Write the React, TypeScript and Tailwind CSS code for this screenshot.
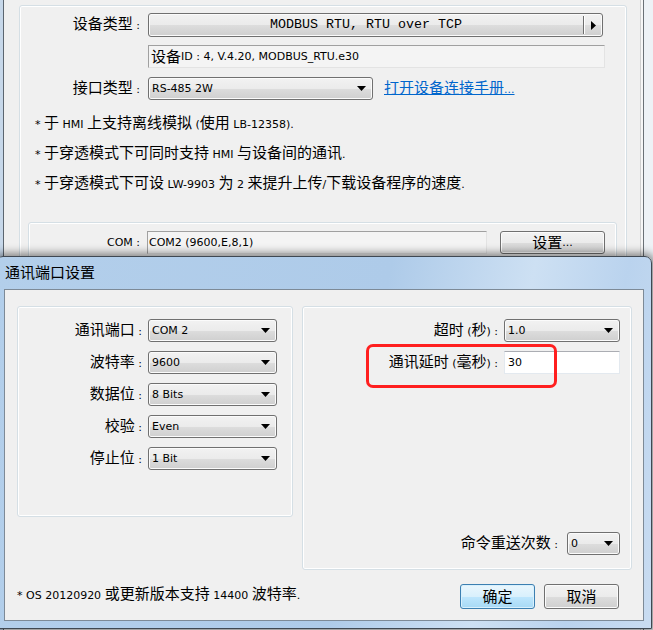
import React from "react";

const CJK_RE = /([\u2e80-\u9fff\u3000-\u303f\uff00-\uffef]+)/;

function T({ text, big = false }: { text: string; big?: boolean }) {
  const parts = text.split(CJK_RE);
  return (
    <>
      {parts.map((p, i) =>
        p === "" ? null : CJK_RE.test(p) ? (
          <span key={i} className={big ? "text-[15px]" : "text-[15px]"}>
            {p}
          </span>
        ) : (
          <span key={i} className="text-[11px]">
            {p}
          </span>
        )
      )}
    </>
  );
}

function DownArrow() {
  return (
    <svg width="9" height="5" viewBox="0 0 9 5" className="shrink-0">
      <polygon points="0,0 9,0 4.5,5" fill="#000" />
    </svg>
  );
}

function Combo({ value, className }: { value: string; className: string }) {
  return (
    <div
      className={
        "flex items-center justify-between rounded-[3px] border border-[#707070] bg-[linear-gradient(to_bottom,#f2f2f2_0%,#ebebeb_50%,#dddddd_51%,#cfcfcf_100%)] pl-[3px] pr-[6px] shadow-[inset_0_0_0_1px_#fbfbfb] leading-[20px] " +
        className
      }
    >
      <span className="whitespace-nowrap">
        <T text={value} />
      </span>
      <DownArrow />
    </div>
  );
}

function WinButton({ label, className, def = false }: { label: string; className: string; def?: boolean }) {
  return (
    <div
      className={
        (def
          ? "border-[#3c7fb1] bg-[linear-gradient(to_bottom,#eaf6fd_0%,#d9f0fc_50%,#bee6fd_51%,#a7d9f5_100%)] shadow-[inset_0_0_0_1px_#d8f0fd] "
          : "border-[#707070] bg-[linear-gradient(to_bottom,#f2f2f2_0%,#ebebeb_50%,#dddddd_51%,#cfcfcf_100%)] shadow-[inset_0_0_0_1px_#fbfbfb] ") +
        "flex items-center justify-center rounded-[3px] border leading-[20px] " +
        className
      }
    >
      <T text={label} />
    </div>
  );
}

export default function App() {
  return (
    <div className="relative h-[630px] w-[653px] overflow-hidden bg-[#f0f0f0] font-['DejaVu_Sans','Noto_Sans_CJK_SC',sans-serif] text-[11px] text-black">
      {/* background window */}
      <div className="flex h-full">
        <div className="w-[3px] bg-[#c7d8ea]" />
        <div className="w-px bg-[#5c6670]" />
        <div className="w-[636px] bg-[#f0f0f0] pl-[15px] pt-[5px]">
          <div className="h-[320px] w-[608px] rounded-[3px] border border-[#d5dfe5] shadow-[inset_0_0_0_1px_#ffffff]">
            {/* row 1 */}
            <div className="mt-[7px] flex items-center">
              <div className="w-[120px] text-right leading-[20px]">
                <T text="设备类型 :" />
              </div>
              <div className="ml-[8px] flex h-[24px] w-[455px] items-center rounded-[3px] border border-[#707070] bg-[linear-gradient(to_bottom,#f2f2f2_0%,#ebebeb_50%,#dddddd_51%,#cfcfcf_100%)] shadow-[inset_0_0_0_1px_#fbfbfb]">
                <span className="flex-1 text-center font-['Liberation_Mono'] text-[13.33px] leading-[20px]">
                  MODBUS RTU, RTU over TCP
                </span>
                <div className="h-[18px] w-px bg-[#6e6e6e]" />
                <div className="h-[18px] w-px bg-[#ffffff]" />
                <div className="flex w-[17px] justify-center">
                  <svg width="5" height="9" viewBox="0 0 5 9">
                    <polygon points="0,0 5,4.5 0,9" fill="#000" />
                  </svg>
                </div>
              </div>
            </div>
            {/* row 2 */}
            <div className="ml-[128px] mt-[8px] flex h-[23px] w-[457px] items-center border border-[#e3e3e3] border-l-[#a0a0a0] border-t-[#a0a0a0] bg-[#f4f4f4] pl-[2px] leading-[20px]">
              <T text="设备 ID : 4, V.4.20, MODBUS_RTU.e30" />
            </div>
            {/* row 3 */}
            <div className="mt-[9px] flex items-center">
              <div className="w-[120px] text-right leading-[20px]">
                <T text="接口类型 :" />
              </div>
              <Combo value="RS-485 2W" className="ml-[8px] h-[23px] w-[225px]" />
              <a className="ml-[11px] text-[#0066cc] underline leading-[20px]">
                <T text="打开设备连接手册..." />
              </a>
            </div>
            {/* bullets */}
            <div className="mt-[9px] pl-[15px] leading-[28px]">
              <div>
                <T text="* 于 HMI 上支持离线模拟 (使用 LB-12358)." />
              </div>
              <div>
                <T text="* 于穿透模式下可同时支持 HMI 与设备间的通讯." />
              </div>
              <div>
                <T text="* 于穿透模式下可设 LW-9903 为 2 来提升上传/下载设备程序的速度." />
              </div>
            </div>
            {/* COM group */}
            <div className="ml-[8px] mt-[23px] h-[100px] w-[589px] rounded-[3px] border border-[#d5dfe5] shadow-[inset_0_0_0_1px_#ffffff]">
              <div className="flex items-center pt-[8px]">
                <div className="w-[111px] text-right leading-[20px]">
                  <T text="COM :" />
                </div>
                <div className="ml-[7px] flex h-[23px] w-[340px] items-center border border-[#e3e3e3] border-l-[#a0a0a0] border-t-[#a0a0a0] bg-[#f4f4f4] pl-[1px] leading-[20px]">
                  <T text="COM2 (9600,E,8,1)" />
                </div>
                <WinButton label="设置..." className="ml-[13px] h-[23px] w-[105px]" />
              </div>
            </div>
          </div>
        </div>
        <div className="w-px bg-[#cfcfcf]" />
        <div className="w-[2px] bg-[#f6f6f6]" />
        <div className="w-px bg-[#6a7076]" />
        <div className="flex-1 bg-[#eef2f6]" />
      </div>

      {/* dialog */}
      <div className="absolute left-[-4px] top-[256px] flex h-[373px] w-[656px] flex-col rounded-t-[7px] border border-[#3f4852] bg-[linear-gradient(100deg,#b3cfeb_0%,#aecbe9_55%,#cde0f3_75%,#bad3ee_88%,#c9dcf1_100%)] shadow-[0_0_9px_3px_rgba(0,0,0,0.45)]">
        <div className="flex h-[32px] items-center pl-[8px] leading-[20px]">
          <T text="通讯端口设置" />
        </div>
        <div className="ml-[7px] h-[332px] w-[640px] border border-[#7d8a97] bg-[#f0f0f0]">
          <div className="flex items-start">
            {/* left group */}
            <div className="ml-[12px] mt-[16px] flex h-[211px] w-[276px] flex-col gap-[9px] rounded-[3px] border border-[#d5dfe5] pt-[12px] shadow-[inset_0_0_0_1px_#ffffff]">
              {[
                ["通讯端口 :", "COM 2"],
                ["波特率 :", "9600"],
                ["数据位 :", "8 Bits"],
                ["校验 :", "Even"],
                ["停止位 :", "1 Bit"],
              ].map(([l, v]) => (
                <div key={l} className="flex items-center">
                  <div className="w-[124px] text-right leading-[20px]">
                    <T text={l} />
                  </div>
                  <Combo value={v} className="ml-[6px] h-[23px] w-[129px]" />
                </div>
              ))}
            </div>
            {/* right group */}
            <div className="ml-[9px] mt-[16px] flex h-[264px] w-[330px] flex-col rounded-[3px] border border-[#d5dfe5] pr-[11px] pt-[12px] shadow-[inset_0_0_0_1px_#ffffff]">
              <div className="flex items-center justify-end">
                <div className="leading-[20px]">
                  <T text="超时 (秒) :" />
                </div>
                <Combo value="1.0" className="ml-[6px] h-[23px] w-[116px]" />
              </div>
              <div className="mt-[9px] flex items-center justify-end">
                <div className="leading-[20px]">
                  <T text="通讯延时 (毫秒) :" />
                </div>
                <div className="ml-[6px] flex h-[23px] w-[116px] items-center border border-[#e3e9ef] border-t-[#abadb3] bg-white pl-[3px] leading-[20px]">
                  <T text="30" />
                </div>
              </div>
              <div className="mb-[14px] mt-auto flex items-center justify-end">
                <div className="leading-[20px]">
                  <T text="命令重送次数 :" />
                </div>
                <Combo value="0" className="ml-[9px] h-[23px] w-[53px]" />
              </div>
            </div>
          </div>
          {/* bottom row */}
          <div className="mt-[14px] flex items-start">
            <div className="pl-[12px] leading-[20px]">
              <T text="* OS 20120920 或更新版本支持 14400 波特率." />
            </div>
            <div className="ml-auto mr-[24px] flex gap-[9px]">
              <WinButton def label="确定" className="h-[25px] w-[75px]" />
              <WinButton label="取消" className="h-[25px] w-[75px]" />
            </div>
          </div>
        </div>
      </div>

      {/* red highlight */}
      <div className="absolute left-[366px] top-[344px] h-[44px] w-[191px] rounded-[7px] border-[3px] border-[#ff1f1f]" />
    </div>
  );
}
